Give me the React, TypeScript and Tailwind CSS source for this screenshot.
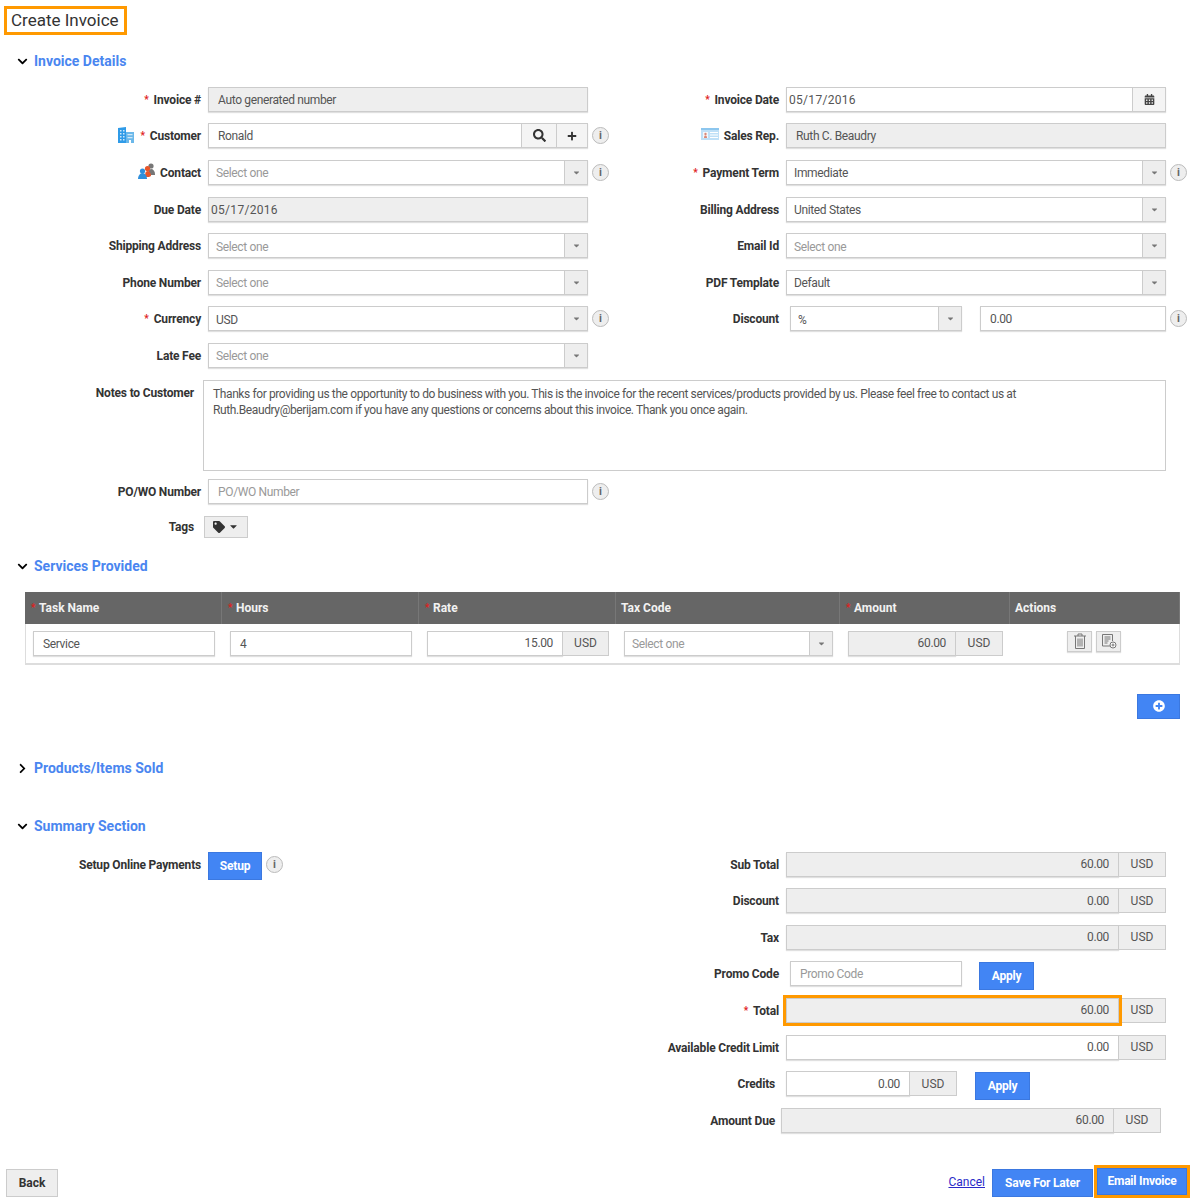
import type { ReactNode } from "react";
import {
  FaCalendarAlt,
  FaCaretDown,
  FaChevronDown,
  FaChevronRight,
  FaPlus,
  FaPlusCircle,
  FaSearch,
  FaTag,
} from "react-icons/fa";

const fieldBox = "h-[25px] border border-[#ccc] shadow-[0_1px_1px_rgba(0,0,0,0.12)] text-[12px] tracking-[-0.35px] flex items-center";

const Heading = ({ title, open = true, className }: { title: string; open?: boolean; className: string }) => (
  <div className={`flex h-[20px] items-center pl-[17px] ${className}`}>
    <span className="flex w-[17px] items-center text-black">
      {open ? <FaChevronDown size={11} /> : <FaChevronRight size={11} />}
    </span>
    <h2 className="text-[14px] font-bold text-[#4a86f0]">{title}</h2>
  </div>
);

const Star = () => <span className="mr-[5px] text-[10px] leading-none text-[#e02020]">*</span>;

const Label = ({ children, req, icon, width }: { children: ReactNode; req?: boolean; icon?: ReactNode; width: string }) => (
  <label className={`flex shrink-0 items-center justify-end pt-px text-[12px] font-bold tracking-[-0.18px] text-[#333] ${width}`}>
    {icon}
    {req && <Star />}
    {children}
  </label>
);

const Info = () => (
  <span className="ml-[4px] flex h-[17px] w-[17px] shrink-0 items-center justify-center rounded-full border border-[#bbb] bg-[#eee] text-[11px] font-bold leading-none text-[#666]">
    i
  </span>
);

const Select = ({ value, width = "w-[380px]" }: { value?: string; width?: string }) => (
  <div className={`${fieldBox} ${width} bg-white`}>
    <span className={`flex-1 pt-[2px] pl-[7px] ${value ? "text-[#555]" : "text-[#999]"}`}>{value ?? "Select one"}</span>
    <span className="flex h-full w-[23px] items-center justify-center border-l border-[#ccc] bg-[#eee] text-[#777]">
      <FaCaretDown size={9} />
    </span>
  </div>
);

const Input = ({ value, muted, grey, width = "w-[380px]", pad = "pl-[9px]" }: { value: ReactNode; muted?: boolean; grey?: boolean; width?: string; pad?: string }) => (
  <div className={`${fieldBox} ${width} ${pad} pt-px ${grey ? "bg-[#eee]" : "bg-white"} ${muted ? "text-[#999]" : "text-[#555]"}`}>
    {value}
  </div>
);

const Date = () => <span className="tracking-[0.3px]">05/17/2016</span>;

const Money = ({ value, grey, width, ring }: { value: string; grey?: boolean; width: string; ring?: boolean }) => (
  <div className="flex">
    <div className={`${fieldBox} ${width} justify-end pr-[9px] text-[#555] ${grey ? "bg-[#eee]" : "bg-white"} ${ring ? "relative z-10 outline-3 outline-[#f90]" : ""}`}>
      {value}
    </div>
    <div className="-ml-px flex h-[25px] w-[48px] items-center justify-center border border-[#ccc] bg-[#eee] text-[12px] text-[#555]">
      USD
    </div>
  </div>
);

const Row = ({ children }: { children: ReactNode }) => <div className="flex h-[36.6px] items-center">{children}</div>;

const BlueButton = ({ children, className }: { children: ReactNode; className: string }) => (
  <button className={`flex items-center justify-center border border-[#3b78e0] bg-[#4285f4] text-[12px] font-bold tracking-[-0.2px] text-white ${className}`}>
    {children}
  </button>
);

const BuildingIcon = () => (
  <svg width="18" height="16" viewBox="0 0 18 16" className="mr-[5px] mb-[3px]">
    <path d="M1 16V1l8-1v16z" fill="#2f9be8" />
    <path d="M9 5h8v11H9z" fill="#6bb8ea" />
    <path d="M3 3h1.5v1.5H3zM6 3h1.5v1.5H6zM3 6h1.5v1.5H3zM6 6h1.5v1.5H6zM3 9h1.5v1.5H3zM6 9h1.5v1.5H6zM3 12h1.5v1.5H3zM6 12h1.5v1.5H6zM10.5 7h5v1.2h-5zM10.5 10h5v1.2h-5z" fill="#cfe8f8" />
    <path d="M12 13h2v3h-2z" fill="#fff" />
  </svg>
);

const ContactIcon = () => (
  <svg width="18" height="16" viewBox="0 0 18 16" className="mr-[4px] mb-[3px]">
    <circle cx="13" cy="3" r="2.6" fill="#777" />
    <path d="M10 12c0-4 1-6 3-6s4 2 4 5v1z" fill="#777" />
    <circle cx="9.5" cy="5.5" r="2.6" fill="#e8562a" />
    <path d="M7 14c0-4 .5-6 2.5-6s3.5 2 3.5 5l-2 1z" fill="#e8562a" />
    <circle cx="4.5" cy="8" r="2.6" fill="#2f8fdc" />
    <path d="M0 16c0-3 2-6 4.500-6S9 13 9 16z" fill="#2f8fdc" />
  </svg>
);

const CardIcon = () => (
  <svg width="18" height="12" viewBox="0 0 18 12" className="mr-[5px] mb-[4px]">
    <rect width="18" height="12" fill="#bfe0f7" />
    <rect x="0" y="0" width="18" height="2" fill="#8cc6ee" />
    <rect x="2" y="4" width="5" height="6" fill="#f4f8fb" />
    <circle cx="4.500" cy="6" r="1.200" fill="#d98a7a" />
    <path d="M3 10c0-2 .6-2.500 1.500-2.500S6 8 6 10z" fill="#d98a7a" />
    <path d="M9 4h8v1H9zM9 6.500h8v1H9zM9 9h8v1H9z" fill="#fff" />
  </svg>
);

const TrashIcon = () => (
  <svg width="14" height="16" viewBox="0 0 14 16" fill="none" stroke="#777" strokeWidth="1">
    <path d="M1 3h12M5 3V1h4v2M2.500 3v12.500h9V3M5 5.500v8M7 5.500v8M9 5.500v8" />
  </svg>
);

const DocPlusIcon = () => (
  <svg width="16" height="16" viewBox="0 0 16 16" fill="none" stroke="#777" strokeWidth="1">
    <path d="M9 13H1.500V1.500h10V8" />
    <path d="M3.500 4h6M3.500 6h6M3.500 8h4M3.500 10h3" />
    <circle cx="12" cy="12" r="3" fill="#fff" />
    <path d="M12 10.500v3M10.500 12h3" />
  </svg>
);

const HeaderCell = ({ title, req }: { title: string; req?: boolean }) => (
  <div className={`flex items-center border-r border-[#777] text-[12px] font-bold text-[#f2f2f2] ${req ? "pl-[6px]" : "pl-[5px]"}`}>
    {req && <span className="w-[8px] text-[10px] text-[#e02020]">*</span>}
    {title}
  </div>
);

const Cell = ({ children }: { children: ReactNode }) => <div className="pt-[7px] pl-[8px] pr-[7px]">{children}</div>;

const ActionButton = ({ children }: { children: ReactNode }) => (
  <span className="flex h-[21px] w-[25px] items-center justify-center border border-[#ccc] bg-[#eee] shadow-[0_1px_1px_rgba(0,0,0,0.12)]">
    {children}
  </span>
);

export default function App() {
  return (
    <div className="h-[1198px] w-[1200px] overflow-hidden bg-white font-[Roboto,sans-serif]">
      <div className="flow-root">
        <h1 className="mt-[6px] ml-[4px] flex h-[29px] w-[123px] items-center border-[3px] border-[#f90] pt-px pl-[4px] text-[17px] whitespace-nowrap text-[#333]">
          Create Invoice
        </h1>
      </div>

      <Heading title="Invoice Details" className="mt-[16px]" />

      <div className="mt-[10px] grid grid-cols-[620px_1fr]">
        <div>
          <Row>
            <Label req width="w-[201px]">Invoice #</Label>
            <div className="ml-[7px]"><Input value="Auto generated number" grey /></div>
          </Row>
          <Row>
            <Label req icon={<BuildingIcon />} width="w-[201px]">Customer</Label>
            <div className={`${fieldBox} ml-[7px] w-[380px] bg-white pl-[9px] text-[#555]`}>
              <span className="flex-1 pt-px">Ronald</span>
              <span className="flex h-full w-[35px] items-center justify-center border-l border-[#ccc] bg-[#f4f4f4] text-[#333]"><FaSearch size={13} /></span>
              <span className="flex h-full w-[31px] items-center justify-center border-l border-[#ccc] bg-[#f4f4f4] text-[#333]"><FaPlus size={10} /></span>
            </div>
            <Info />
          </Row>
          <Row>
            <Label icon={<ContactIcon />} width="w-[201px]">Contact</Label>
            <div className="ml-[7px]"><Select /></div>
            <Info />
          </Row>
          <Row>
            <Label width="w-[201px]">Due Date</Label>
            <div className="ml-[7px]"><Input value={<Date />} grey pad="pl-[2px]" /></div>
          </Row>
          <Row>
            <Label width="w-[201px]">Shipping Address</Label>
            <div className="ml-[7px]"><Select /></div>
          </Row>
          <Row>
            <Label width="w-[201px]">Phone Number</Label>
            <div className="ml-[7px]"><Select /></div>
          </Row>
          <Row>
            <Label req width="w-[201px]">Currency</Label>
            <div className="ml-[7px]"><Select value="USD" /></div>
            <Info />
          </Row>
          <Row>
            <Label width="w-[201px]">Late Fee</Label>
            <div className="ml-[7px]"><Select /></div>
          </Row>
        </div>

        <div>
          <Row>
            <Label req width="w-[159px]">Invoice Date</Label>
            <div className={`${fieldBox} ml-[7px] w-[380px] bg-white pl-[2px] text-[#555]`}>
              <span className="flex-1 pt-px"><Date /></span>
              <span className="flex h-full w-[33px] items-center justify-center border-l border-[#ccc] bg-[#f4f4f4] text-[#444]"><FaCalendarAlt size={11} /></span>
            </div>
          </Row>
          <Row>
            <Label icon={<CardIcon />} width="w-[159px]">Sales Rep.</Label>
            <div className="ml-[7px]"><Input value="Ruth C. Beaudry" grey /></div>
          </Row>
          <Row>
            <Label req width="w-[159px]">Payment Term</Label>
            <div className="ml-[7px]"><Select value="Immediate" /></div>
            <Info />
          </Row>
          <Row>
            <Label width="w-[159px]">Billing Address</Label>
            <div className="ml-[7px]"><Select value="United States" /></div>
          </Row>
          <Row>
            <Label width="w-[159px]">Email Id</Label>
            <div className="ml-[7px]"><Select /></div>
          </Row>
          <Row>
            <Label width="w-[159px]">PDF Template</Label>
            <div className="ml-[7px]"><Select value="Default" /></div>
          </Row>
          <Row>
            <Label width="w-[159px]">Discount</Label>
            <div className="ml-[11px]"><Select value="%" width="w-[172px]" /></div>
            <div className="ml-[18px]"><Input value="0.00" width="w-[186px]" /></div>
            <Info />
          </Row>
        </div>
      </div>

      <div className="mt-[6px] flex">
        <Label width="h-[26px] w-[194px]">Notes to Customer</Label>
        <div className="ml-[9px] h-[91px] w-[963px] border border-[#ccc] px-[9px] py-[5px] text-[12px] leading-[16px] tracking-[-0.39px] text-[#555]">
          Thanks for providing us the opportunity to do business with you. This is the invoice for the recent services/products provided by us. Please feel free to contact us at
          <br />
          Ruth.Beaudry@berijam.com if you have any questions or concerns about this invoice. Thank you once again.
        </div>
      </div>

      <div className="mt-[8px] flex items-center">
        <Label width="w-[201px]">PO/WO Number</Label>
        <div className="ml-[7px]"><Input value="PO/WO Number" muted /></div>
        <Info />
      </div>

      <div className="mt-[12px] flex items-center">
        <Label width="w-[194px] pt-[2px]">Tags</Label>
        <button className="ml-[10px] flex h-[22px] w-[44px] items-center justify-center border border-[#ccc] bg-[#eee] text-[#333]">
          <FaTag size={12} />
          <FaCaretDown size={11} className="ml-[3px]" />
        </button>
      </div>

      <Heading title="Services Provided" className="mt-[19px]" />

      <div className="mt-[15px] ml-[25px] w-[1155px] border-b-2 border-[#ddd] shadow-[inset_1px_0_0_#ddd,inset_-1px_0_0_#ddd]">
        <div className="grid h-[32px] grid-cols-[197px_197px_197px_224px_170px_1fr] bg-[#666]">
          <HeaderCell title="Task Name" req />
          <HeaderCell title="Hours" req />
          <HeaderCell title="Rate" req />
          <HeaderCell title="Tax Code" />
          <HeaderCell title="Amount" req />
          <HeaderCell title="Actions" />
        </div>
        <div className="grid h-[39px] grid-cols-[197px_197px_197px_224px_170px_1fr]">
          <Cell><Input value="Service" width="w-full" /></Cell>
          <Cell><Input value="4" width="w-full" /></Cell>
          <Cell>
            <div className="flex">
              <div className={`${fieldBox} w-[136px] justify-end pr-[9px] text-[#555]`}>15.00</div>
              <div className="-ml-px flex h-[25px] flex-1 items-center justify-center border border-[#ccc] bg-[#eee] text-[12px] text-[#555]">USD</div>
            </div>
          </Cell>
          <Cell><Select width="w-full" /></Cell>
          <Cell>
            <div className="flex">
              <div className={`${fieldBox} w-[108px] justify-end bg-[#eee] pr-[9px] text-[#555]`}>60.00</div>
              <div className="-ml-px flex h-[25px] flex-1 items-center justify-center border border-[#ccc] bg-[#eee] text-[12px] text-[#555]">USD</div>
            </div>
          </Cell>
          <div className="flex gap-[4px] pt-[7px] pl-[57px]">
            <ActionButton><TrashIcon /></ActionButton>
            <ActionButton><DocPlusIcon /></ActionButton>
          </div>
        </div>
      </div>

      <div className="mt-[29px] flex justify-end pr-[20px]">
        <BlueButton className="h-[25px] w-[43px]"><FaPlusCircle size={12} /></BlueButton>
      </div>

      <Heading title="Products/Items Sold" open={false} className="mt-[40px]" />
      <Heading title="Summary Section" className="mt-[38px]" />

      <div className="mt-[9px] grid grid-cols-[620px_1fr]">
        <div className="flex h-[36.6px] items-center">
          <Label width="w-[201px]">Setup Online Payments</Label>
          <BlueButton className="ml-[7px] mt-[3px] h-[28px] w-[54px]">Setup</BlueButton>
          <Info />
        </div>
        <div>
          <Row>
            <Label width="w-[159px]">Sub Total</Label>
            <div className="ml-[7px]"><Money value="60.00" grey width="w-[333px]" /></div>
          </Row>
          <Row>
            <Label width="w-[159px]">Discount</Label>
            <div className="ml-[7px]"><Money value="0.00" grey width="w-[333px]" /></div>
          </Row>
          <Row>
            <Label width="w-[159px]">Tax</Label>
            <div className="ml-[7px]"><Money value="0.00" grey width="w-[333px]" /></div>
          </Row>
          <Row>
            <Label width="w-[159px]">Promo Code</Label>
            <div className="ml-[11px]"><Input value="Promo Code" muted width="w-[172px]" /></div>
            <BlueButton className="ml-[17px] mt-[4px] h-[28px] w-[55px]">Apply</BlueButton>
          </Row>
          <Row>
            <Label req width="w-[159px]">Total</Label>
            <div className="ml-[7px]"><Money value="60.00" grey ring width="w-[333px]" /></div>
          </Row>
          <Row>
            <Label width="w-[159px]">Available Credit Limit</Label>
            <div className="ml-[7px]"><Money value="0.00" width="w-[333px]" /></div>
          </Row>
          <Row>
            <Label width="w-[155px]">Credits</Label>
            <div className="ml-[11px]"><Money value="0.00" width="w-[124px]" /></div>
            <BlueButton className="ml-[18px] mt-[4px] h-[28px] w-[55px]">Apply</BlueButton>
          </Row>
          <Row>
            <Label width="w-[155px]">Amount Due</Label>
            <div className="ml-[6px]"><Money value="60.00" grey width="w-[333px]" /></div>
          </Row>
        </div>
      </div>

      <div className="mt-[25px] flex h-[34px] items-end justify-between pr-[10px] pl-[6px]">
        <button className="mb-px h-[28px] w-[52px] border border-[#ccc] bg-[#eee] text-[12px] font-bold text-[#333]">Back</button>
        <div className="flex items-end">
          <a href="#cancel" className="mr-[7px] mb-[7px] text-[12px] text-[#2a2ac8] underline">Cancel</a>
          <BlueButton className="mb-px h-[28px] w-[101px]">Save For Later</BlueButton>
          <div className="ml-px h-[33px] w-[96px] border-[3px] border-[#f90]">
            <BlueButton className="h-full w-full">Email Invoice</BlueButton>
          </div>
        </div>
      </div>
    </div>
  );
}
